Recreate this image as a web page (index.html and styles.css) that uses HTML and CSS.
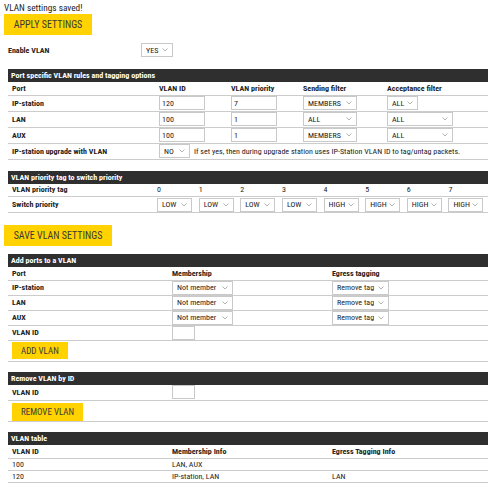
FILE: index.html
```html
<!DOCTYPE html>
<html>
<head>
<meta charset="utf-8">
<link rel="stylesheet" href="styles.css">
</head>
<body>
<div class="page">
  <div class="msg">VLAN settings saved!</div>
  <button class="btn btn-apply">APPLY SETTINGS</button>

  <div class="enable">
    <span class="enable-label">Enable VLAN</span>
    <span class="sel w32"><select><option>YES</option></select><svg class="chev" viewBox="0 0 6 4"><path d="M0.5 0.5 L3 3 L5.5 0.5"/></svg></span>
  </div>

  <table class="grid t1">
    <colgroup><col class="c1a"><col class="c1b"><col class="c1c"><col class="c1d"><col></colgroup>
    <tr class="head"><th colspan="5">Port specific VLAN rules and tagging options</th></tr>
    <tr class="cols"><th>Port</th><th>VLAN ID</th><th>VLAN priority</th><th>Sending filter</th><th>Acceptance filter</th></tr>
    <tr><th>IP-station</th><td><input class="inp w46" value="120"></td><td><input class="inp w46" value="7"></td>
      <td><span class="sel w54"><select><option>MEMBERS</option></select><svg class="chev" viewBox="0 0 6 4"><path d="M0.5 0.5 L3 3 L5.5 0.5"/></svg></span></td>
      <td><span class="sel w31"><select><option>ALL</option></select><svg class="chev" viewBox="0 0 6 4"><path d="M0.5 0.5 L3 3 L5.5 0.5"/></svg></span></td></tr>
    <tr><th>LAN</th><td><input class="inp w46" value="100"></td><td><input class="inp w46" value="1"></td>
      <td><span class="sel w54"><select><option>ALL</option></select><svg class="chev" viewBox="0 0 6 4"><path d="M0.5 0.5 L3 3 L5.5 0.5"/></svg></span></td>
      <td><span class="sel w66"><select><option>ALL</option></select><svg class="chev" viewBox="0 0 6 4"><path d="M0.5 0.5 L3 3 L5.5 0.5"/></svg></span></td></tr>
    <tr><th>AUX</th><td><input class="inp w46" value="100"></td><td><input class="inp w46" value="1"></td>
      <td><span class="sel w54"><select><option>MEMBERS</option></select><svg class="chev" viewBox="0 0 6 4"><path d="M0.5 0.5 L3 3 L5.5 0.5"/></svg></span></td>
      <td><span class="sel w66"><select><option>ALL</option></select><svg class="chev" viewBox="0 0 6 4"><path d="M0.5 0.5 L3 3 L5.5 0.5"/></svg></span></td></tr>
    <tr><th>IP-station upgrade with VLAN</th>
      <td colspan="4"><span class="sel w31"><select><option>NO</option></select><svg class="chev" viewBox="0 0 6 4"><path d="M0.5 0.5 L3 3 L5.5 0.5"/></svg></span><span class="note">If set yes, then during upgrade station uses IP-Station VLAN ID to tag/untag packets.</span></td></tr>
  </table>

  <table class="grid t2">
    <colgroup><col class="c2a"><col><col><col><col><col><col><col><col></colgroup>
    <tr class="head"><th colspan="9">VLAN priority tag to switch priority</th></tr>
    <tr class="cols"><th>VLAN priority tag</th><td>0</td><td>1</td><td>2</td><td>3</td><td>4</td><td>5</td><td>6</td><td>7</td></tr>
    <tr><th>Switch priority</th>
      <td><span class="sel w35"><select><option>LOW</option></select><svg class="chev" viewBox="0 0 6 4"><path d="M0.5 0.5 L3 3 L5.5 0.5"/></svg></span></td>
      <td><span class="sel w35"><select><option>LOW</option></select><svg class="chev" viewBox="0 0 6 4"><path d="M0.5 0.5 L3 3 L5.5 0.5"/></svg></span></td>
      <td><span class="sel w35"><select><option>LOW</option></select><svg class="chev" viewBox="0 0 6 4"><path d="M0.5 0.5 L3 3 L5.5 0.5"/></svg></span></td>
      <td><span class="sel w35"><select><option>LOW</option></select><svg class="chev" viewBox="0 0 6 4"><path d="M0.5 0.5 L3 3 L5.5 0.5"/></svg></span></td>
      <td><span class="sel w35"><select><option>HIGH</option></select><svg class="chev" viewBox="0 0 6 4"><path d="M0.5 0.5 L3 3 L5.5 0.5"/></svg></span></td>
      <td><span class="sel w35"><select><option>HIGH</option></select><svg class="chev" viewBox="0 0 6 4"><path d="M0.5 0.5 L3 3 L5.5 0.5"/></svg></span></td>
      <td><span class="sel w35"><select><option>HIGH</option></select><svg class="chev" viewBox="0 0 6 4"><path d="M0.5 0.5 L3 3 L5.5 0.5"/></svg></span></td>
      <td><span class="sel w35"><select><option>HIGH</option></select><svg class="chev" viewBox="0 0 6 4"><path d="M0.5 0.5 L3 3 L5.5 0.5"/></svg></span></td>
    </tr>
  </table>

  <button class="btn btn-save">SAVE VLAN SETTINGS</button>

  <table class="grid t3">
    <colgroup><col class="c3a"><col class="c3b"><col></colgroup>
    <tr class="head"><th colspan="3">Add ports to a VLAN</th></tr>
    <tr class="cols"><th>Port</th><th>Membership</th><th>Egress tagging</th></tr>
    <tr><th>IP-station</th>
      <td><span class="sel w61"><select><option>Not member</option></select><svg class="chev" viewBox="0 0 6 4"><path d="M0.5 0.5 L3 3 L5.5 0.5"/></svg></span></td>
      <td><span class="sel w57"><select><option>Remove tag</option></select><svg class="chev" viewBox="0 0 6 4"><path d="M0.5 0.5 L3 3 L5.5 0.5"/></svg></span></td></tr>
    <tr><th>LAN</th>
      <td><span class="sel w61"><select><option>Not member</option></select><svg class="chev" viewBox="0 0 6 4"><path d="M0.5 0.5 L3 3 L5.5 0.5"/></svg></span></td>
      <td><span class="sel w57"><select><option>Remove tag</option></select><svg class="chev" viewBox="0 0 6 4"><path d="M0.5 0.5 L3 3 L5.5 0.5"/></svg></span></td></tr>
    <tr><th>AUX</th>
      <td><span class="sel w61"><select><option>Not member</option></select><svg class="chev" viewBox="0 0 6 4"><path d="M0.5 0.5 L3 3 L5.5 0.5"/></svg></span></td>
      <td><span class="sel w57"><select><option>Remove tag</option></select><svg class="chev" viewBox="0 0 6 4"><path d="M0.5 0.5 L3 3 L5.5 0.5"/></svg></span></td></tr>
    <tr><th>VLAN ID</th><td><input class="inp w23"></td><td></td></tr>
    <tr class="btnrow"><td colspan="3"><button class="btn btn-small">ADD VLAN</button></td></tr>
  </table>

  <table class="grid t4">
    <colgroup><col class="c3a"><col></colgroup>
    <tr class="head"><th colspan="2">Remove VLAN by ID</th></tr>
    <tr><th>VLAN ID</th><td><input class="inp w23"></td></tr>
    <tr class="btnrow"><td colspan="2"><button class="btn btn-small btn-remove">REMOVE VLAN</button></td></tr>
  </table>

  <table class="grid t5">
    <colgroup><col class="c3a"><col class="c3b"><col></colgroup>
    <tr class="head"><th colspan="3">VLAN table</th></tr>
    <tr class="cols"><th>VLAN ID</th><th>Membership Info</th><th>Egress Tagging Info</th></tr>
    <tr class="data"><td>100</td><td>LAN, AUX</td><td></td></tr>
    <tr class="data"><td>120</td><td>IP-station, LAN</td><td>LAN</td></tr>
  </table>
</div>
</body>
</html>
```
FILE: styles.css
```css
* { box-sizing: border-box; }
html, body { margin: 0; padding: 0; background: #fff; }
body {
  font-family: "Liberation Sans Narrow", "Roboto Condensed", "DejaVu Sans Condensed", sans-serif;
  font-size: 8px;
  color: #222;
}
.page { padding: 3px 4px; width: 492px; }
.msg { font-size: 9.3px; line-height: 10px; height: 11px; }

.btn {
  display: block;
  border: none;
  background: #ffd200;
  color: #3a3a3a;
  font-family: inherit;
  font-size: 10px;
  padding: 0;
  cursor: pointer;
}
.btn-apply { width: 88px; height: 21px; }
.btn-save { width: 108px; height: 21px; margin: 12px 0 8px 0; }
.btn-small { height: 17px; padding: 0 9px; font-size: 9px; }
.btn-remove { height: 18px; margin-top: 1px; }

.enable { display: flex; align-items: center; height: 16px; margin: 7px 0 11px 4px; }
.enable-label { font-weight: bold; width: 133px; }

.grid {
  border-collapse: collapse;
  table-layout: fixed;
  width: 480px;
  margin-left: 4px;
}
.grid th, .grid td {
  text-align: left;
  padding: 0 0 0 2px;
  height: 16px;
  border-bottom: 1px solid #cccccc;
  white-space: nowrap;
  vertical-align: middle;
}
.grid th:first-child, .grid td:first-child { padding-left: 4px; }
.grid th { font-weight: bold; }
.grid tr.head th {
  background: #2f2f2f;
  color: #fff;
  height: 13px;
  border-bottom: none;
  font-size: 8px;
  padding-left: 3px;
}
.grid tr.cols th, .grid tr.cols td { height: 13px; }
.t3 th, .t3 td { height: 15px; }
.grid tr.data td { height: 12px; }
.grid tr.btnrow td { height: 21px; padding-left: 4px; }

.c1a { width: 149px; }
.c1b { width: 72px; }
.c1c { width: 72px; }
.c1d { width: 84px; }
.c2a { width: 147px; }
.c3a { width: 162px; }
.c3b { width: 160px; }

.t2 { margin-top: 11px; }
.t4 { margin-top: 10px; }
.t5 { margin-top: 10px; }

.inp {
  font-family: inherit;
  font-size: 8px;
  height: 14px;
  border: 1px solid #c9c9c9;
  padding: 0 2px;
  color: #222;
  vertical-align: middle;
}
.w46 { width: 46px; }
.w23 { width: 23px; }

.sel {
  position: relative;
  display: inline-block;
  height: 14px;
  vertical-align: middle;
}
.sel select {
  -webkit-appearance: none;
  appearance: none;
  width: 100%;
  height: 14px;
  border: 1px solid #c9c9c9;
  border-radius: 0;
  background: #fff;
  font-family: inherit;
  font-size: 8px;
  color: #222;
  padding: 0 0 0 4px;
  margin: 0;
  display: block;
}
.chev {
  position: absolute;
  right: 5px;
  top: 5px;
  width: 6px;
  height: 4px;
  fill: none;
  stroke: #a0a0a0;
  stroke-width: 0.8;
}
.w31 { width: 31px; }
.w32 { width: 32px; }
.w35 { width: 35px; }
.w54 { width: 54px; }
.w57 { width: 57px; }
.w61 { width: 61px; }
.w66 { width: 66px; }
.note { margin-left: 4px; vertical-align: middle; }
```
